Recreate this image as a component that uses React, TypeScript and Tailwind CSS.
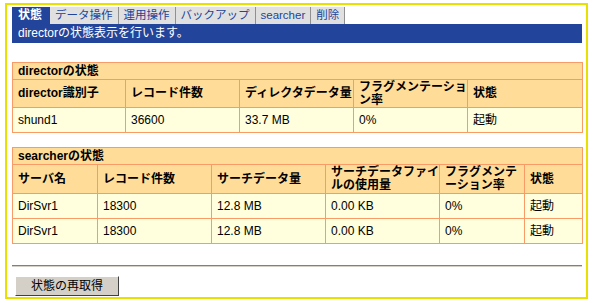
import React from 'react';

// Director status page — tab strip, blue caption bar, two status tables
// and a "refresh" button, all inside a yellow-framed box.

const FONT = { fontFamily: '"Liberation Sans", "Noto Sans CJK JP", sans-serif' };

const TABS = ['状態', 'データ操作', '運用操作', 'バックアップ', 'searcher', '削除'];

const th = 'border border-[#f99b66] bg-[#ffdd99] px-[5px] text-left align-middle font-bold text-[12px] leading-[13px] text-black whitespace-nowrap';
const td = 'border border-[#f99b66] bg-[#ffffdd] px-[5px] text-left align-middle text-[12px] text-black';

const SEARCHERS = [
  { name: 'DirSvr1', records: '18300', size: '12.8 MB', file: '0.00 KB', frag: '0%', state: '起動' },
  { name: 'DirSvr1', records: '18300', size: '12.8 MB', file: '0.00 KB', frag: '0%', state: '起動' },
];

export default function App() {
  return (
    <div className="bg-white w-[594px] h-[303px] pt-[3px] pl-[5px]" style={FONT}>
      <div className="w-[583px] h-[296px] border-2 border-[#e8e000] pt-[2px] pl-[5px] flex flex-col">
        {/* tabs */}
        <div className="flex h-[17px]">
          {TABS.map((t, i) =>
            i === 0 ? (
              <div key={t} className="bg-[#22449a] text-white font-bold text-[12px] leading-[17px] px-[6px] w-[38px]">
                {t}
              </div>
            ) : (
              <div
                key={t}
                className="bg-[#e0e0e0] text-[#22449a] text-[11.5px] leading-[17px] px-[5px] border-r border-[#909090]"
              >
                {t}
              </div>
            ),
          )}
        </div>
        <div className="w-[570px] h-[19px] bg-[#22449a] text-white text-[12px] leading-[19px] pl-[6px]">
          directorの状態表示を行います。
        </div>

        {/* director table */}
        <table className="mt-[19px] w-[570px] border-collapse table-fixed">
          <colgroup>
            <col className="w-[113px]" />
            <col className="w-[114px]" />
            <col className="w-[114px]" />
            <col className="w-[114px]" />
            <col className="w-[115px]" />
          </colgroup>
          <tbody>
            <tr className="h-[17px]">
              <td colSpan={5} className={th}>directorの状態</td>
            </tr>
            <tr className="h-[28px]">
              <td className={th}>director識別子</td>
              <td className={th}>レコード件数</td>
              <td className={th}>ディレクタデータ量</td>
              <td className={th}>フラグメンテーショ<br />ン率</td>
              <td className={th}>状態</td>
            </tr>
            <tr className="h-[25px]">
              <td className={td}>shund1</td>
              <td className={td}>36600</td>
              <td className={td}>33.7 MB</td>
              <td className={td}>0%</td>
              <td className={td}>起動</td>
            </tr>
          </tbody>
        </table>

        {/* searcher table */}
        <table className="mt-[14px] w-[570px] border-collapse table-fixed">
          <colgroup>
            <col className="w-[85px]" />
            <col className="w-[114px]" />
            <col className="w-[114px]" />
            <col className="w-[114px]" />
            <col className="w-[85px]" />
            <col className="w-[58px]" />
          </colgroup>
          <tbody>
            <tr className="h-[17px]">
              <td colSpan={6} className={th}>searcherの状態</td>
            </tr>
            <tr className="h-[29px]">
              <td className={th}>サーバ名</td>
              <td className={th}>レコード件数</td>
              <td className={th}>サーチデータ量</td>
              <td className={th}>サーチデータファイ<br />ルの使用量</td>
              <td className={th}>フラグメンテ<br />ーション率</td>
              <td className={th}>状態</td>
            </tr>
            {SEARCHERS.map((s, i) => (
              <tr key={i} className="h-[25px]">
                <td className={td}>{s.name}</td>
                <td className={td}>{s.records}</td>
                <td className={td}>{s.size}</td>
                <td className={td}>{s.file}</td>
                <td className={td}>{s.frag}</td>
                <td className={td}>{s.state}</td>
              </tr>
            ))}
          </tbody>
        </table>

        <div className="mt-[21px] w-[570px] h-[2px] border-t border-[#808080] border-b border-b-[#d4d0c8]" />

        <button className="mt-[9px] ml-[3px] w-[104px] h-[20px] bg-[#d4d0c8] text-black text-[12px] border border-t-white border-l-white border-b-[#404040] border-r-[#404040]">
          状態の再取得
        </button>
      </div>
    </div>
  );
}
